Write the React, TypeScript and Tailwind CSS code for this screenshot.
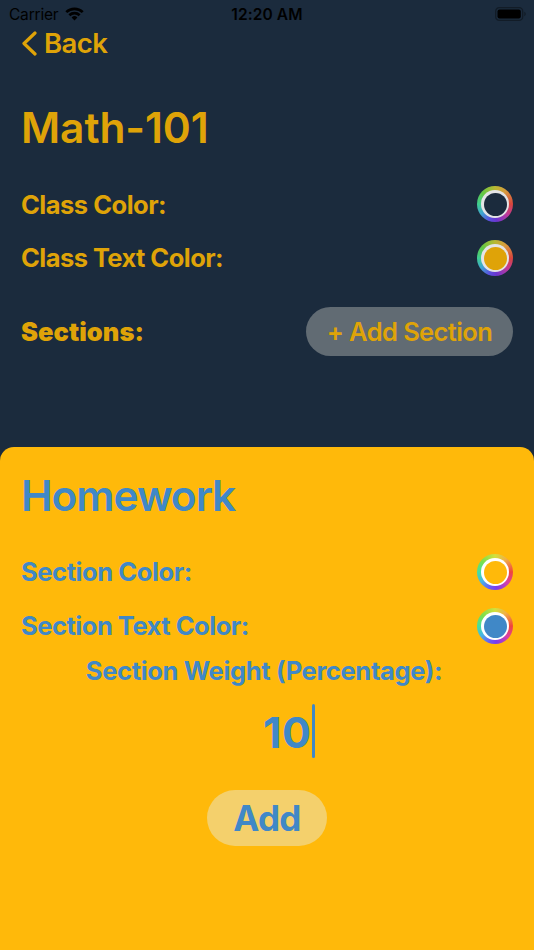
import type { ReactNode } from 'react';

interface ColorRowProps {
  label: string;
  color: string;
  dimmed?: boolean;
  labelClass: string;
}

function ColorWheel({ color, dimmed = false }: { color: string; dimmed?: boolean }) {
  return (
    <button
      aria-label="Pick color"
      className={`
        flex size-9 items-center justify-center rounded-full
        ${dimmed
          ? 'bg-[conic-gradient(from_0deg,#b9b832,#d99a3e_40deg,#d8453c_90deg,#c0399a_130deg,#6a35d0_175deg,#5a50e0_200deg,#3fa5cf_235deg,#3fcf90_270deg,#62c843_310deg,#b9b832)]'
          : 'bg-[conic-gradient(from_0deg,#d3e03c,#f0b045_40deg,#f0453c_90deg,#d93fa5_130deg,#7a3bf0_175deg,#6a5cf5_200deg,#45b5e5_235deg,#45e0a0_270deg,#7be04b_310deg,#d3e03c)]'
        }
      `}
    >
      <span
        className={`flex size-[28px] items-center justify-center rounded-full ${dimmed ? 'bg-[#e4e4e6]' : 'bg-white'}`}
      >
        <span className="size-[23px] rounded-full" style={{ backgroundColor: color }} />
      </span>
    </button>
  );
}

function ColorRow({ label, color, dimmed, labelClass }: ColorRowProps) {
  return (
    <div className="flex h-[54px] items-center justify-between">
      <span className={`text-[25.5px] font-bold ${labelClass}`}>{label}</span>
      <ColorWheel color={color} dimmed={dimmed} />
    </div>
  );
}

function Title({ children, className }: { children: ReactNode; className: string }) {
  return <h1 className={`text-[42.5px] leading-[56px] font-semibold ${className}`}>{children}</h1>;
}

function StatusBar() {
  return (
    <div className="grid h-7 grid-cols-3 items-center pr-[7px] pl-[9px] text-[15.5px] leading-[26px] text-black">
      <div className="flex items-center gap-[7px]">
        <span className="pt-px tracking-[-0.2px]">Carrier</span>
        <svg width="19" height="14" viewBox="0 0 20 15" fill="none" stroke="currentColor" strokeWidth="2.9">
          <path d="M1.2 5.5a12.6 12.6 0 0 1 17.6 0" />
          <path d="M4.5 8.9a7.9 7.9 0 0 1 11 0" />
          <path d="M10 14.4 6.9 11.3a4.4 4.4 0 0 1 6.2 0Z" fill="currentColor" stroke="none" />
        </svg>
      </div>
      <span className="pt-px pr-[2px] text-center font-semibold tracking-[0.1px]">12:20 AM</span>
      <svg className="-mt-px justify-self-end" width="32" height="14" viewBox="0 0 32 14">
        <rect x="0.7" y="0.7" width="27" height="12.6" rx="3.6" fill="none" stroke="#121c27" strokeWidth="1.3" />
        <rect x="2.5" y="2.4" width="23.3" height="9.2" rx="2" fill="#000" />
        <path d="M29.3 4.8c1.9.7 1.9 3.7 0 4.4Z" fill="#121c27" />
      </svg>
    </div>
  );
}

export default function App() {
  return (
    <div className="flex h-[950px] w-[534px] flex-col overflow-hidden bg-[#1b2b3d] font-['Inter',sans-serif]">
      <StatusBar />
      <main className="flex h-[419px] flex-col px-[21px] text-[#dfa308]">
        <button className="flex h-[31px] items-center gap-[7px] text-[27.5px] font-semibold">
          <svg width="16" height="25" viewBox="0 0 16 25" fill="none" stroke="currentColor" strokeWidth="3.2" strokeLinecap="round" strokeLinejoin="round">
            <path d="M14 2 3 12.5 14 23" />
          </svg>
          <span className="tracking-[-0.6px]">Back</span>
        </button>
        <Title className="mt-[41px] tracking-[-0.1px]">Math-101</Title>
        <div className="mt-[21px]">
          <ColorRow label="Class Color:" color="#1b2b3d" dimmed labelClass="pt-[2px] tracking-[-0.5px]" />
          <ColorRow label="Class Text Color:" color="#dfa308" dimmed labelClass="pt-px tracking-[-0.55px]" />
        </div>
        <div className="mt-[22px] flex items-center justify-between">
          <h2 className="pt-px text-[25.5px] font-black tracking-[0.05px]">Sections:</h2>
          <button className="h-[49px] w-[207px] rounded-full bg-[#616b73] pt-px text-[25.5px] font-semibold tracking-[-0.6px]">
            + Add Section
          </button>
        </div>
      </main>
      <section className="flex flex-1 flex-col rounded-t-[14px] bg-[#ffb90a] px-[21px] pt-[21px] text-[#4088c7]">
        <Title className="tracking-[-1.1px]">Homework</Title>
        <div className="mt-[21px]">
          <ColorRow label="Section Color:" color="#ffb90a" labelClass="pt-px tracking-[-0.42px]" />
          <ColorRow label="Section Text Color:" color="#4088c7" labelClass="pt-px tracking-[-0.48px]" />
        </div>
        <p className="pr-[6px] text-center text-[25.5px] leading-9 font-bold tracking-[-0.35px]">
          Section Weight (Percentage):
        </p>
        <div className="mt-[15px] flex h-[54px] items-center justify-end pr-[198.5px]">
          <span className="pt-[2px] text-[43px] font-bold tracking-[0.5px]">10</span>
          <span className="h-full w-[3px] rounded-full bg-current" />
        </div>
        <button className="mt-[31.5px] h-[56.5px] w-[120px] self-center rounded-full bg-[#f4d06c] pt-px text-[35px] font-bold tracking-[-0.7px]">
          Add
        </button>
      </section>
    </div>
  );
}
